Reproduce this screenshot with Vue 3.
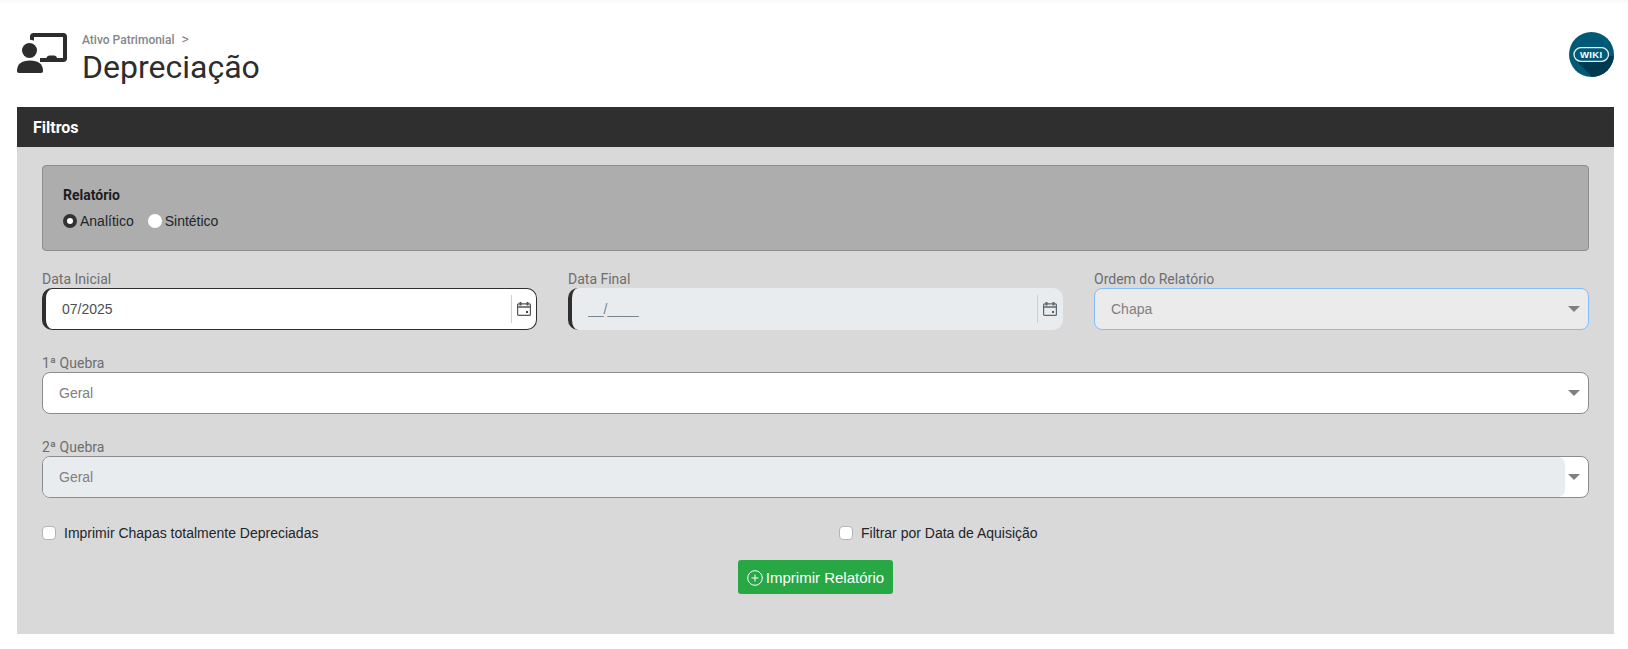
<script setup>
const radios = [
  { label: "Analítico", checked: true },
  { label: "Sintético", checked: false }
]
const checks = ["Imprimir Chapas totalmente Depreciadas", "Filtrar por Data de Aquisição"]
</script>

<template>
  <div class="page">
    <header class="header">
      <div class="title-group">
        <svg class="main-icon" viewBox="0 0 50 42" width="50" height="42">
          <path d="M13 3.500C13 1.400 14.400 0 16.500 0H46.500C48.600 0 50 1.400 50 3.500V25.500C50 27.600 48.600 29 46.500 29H23V25H29.500C29.800 23.500 31 22.500 32.500 22.500H37C38.500 22.500 39.700 23.500 40 25H46V4H17V7.800C15.700 7.200 14.300 6.800 13 6.800Z" fill="#2d2d2d"/>
          <circle cx="12.500" cy="17.500" r="7.500" fill="#2d2d2d"/>
          <path d="M0 38C0 31 4.500 27.500 13 27.500C21.500 27.500 26 31 26 38C26 39.300 25.300 40 24 40H2C.7 40 0 39.300 0 38Z" fill="#2d2d2d"/>
        </svg>
        <div class="titles">
          <div class="crumb">Ativo Patrimonial <span class="crumb-sep">&gt;</span></div>
          <h1 class="title">Depreciação</h1>
        </div>
      </div>
      <svg class="wiki" viewBox="0 0 45 45" width="45" height="45">
        <defs>
          <clipPath id="wiki-clip"><circle cx="22.500" cy="22.500" r="22.500"/></clipPath>
        </defs>
        <circle cx="22.500" cy="22.500" r="22.500" fill="#005a75"/>
        <path d="M7 28L38 24L48 24L48 48L26 48Z" fill="#003a50" clip-path="url(#wiki-clip)"/>
        <rect x="5" y="15.700" width="34.500" height="13.600" rx="6.800" fill="#005a75" stroke="#e8f0f3" stroke-width="1.300"/>
        <text x="22.300" y="26.300" text-anchor="middle" class="wiki-text">WIKI</text>
      </svg>
    </header>

    <section class="card">
      <div class="card-head">Filtros</div>
      <div class="card-body">
        <div class="report-box">
          <div class="report-title">Relatório</div>
          <div class="radios">
            <label class="radio" v-for="r in radios" :key="r.label">
              <span class="radio-dot" :class="{ on: r.checked }"></span>{{ r.label }}
            </label>
          </div>
        </div>

        <div class="row-3">
          <div class="field">
            <label class="lbl">Data Inicial</label>
            <div class="date active">
              <input class="date-input" value="07/2025" readonly>
              <span class="date-btn">
                <svg viewBox="0 0 14 14" width="14" height="14"><path d="M3.500 0V3.500M10.500 0V3.500" stroke="#555" stroke-width="2" fill="none"/><rect x="0.600" y="1.800" width="12.800" height="11.600" rx="1" fill="none" stroke="#555" stroke-width="1.200"/><path d="M1 5H13" stroke="#555" stroke-width="1.500"/><rect x="9" y="9" width="2" height="2" fill="#444"/></svg>
              </span>
            </div>
          </div>
          <div class="field">
            <label class="lbl">Data Final</label>
            <div class="date off">
              <input class="date-input" value="__/____" readonly>
              <span class="date-btn">
                <svg viewBox="0 0 14 14" width="14" height="14"><path d="M3.500 0V3.500M10.500 0V3.500" stroke="#5b6770" stroke-width="2" fill="none"/><rect x="0.600" y="1.800" width="12.800" height="11.600" rx="1" fill="none" stroke="#5b6770" stroke-width="1.200"/><path d="M1 5H13" stroke="#5b6770" stroke-width="1.500"/><rect x="9" y="9" width="2" height="2" fill="#505c66"/></svg>
              </span>
            </div>
          </div>
          <div class="field">
            <label class="lbl">Ordem do Relatório</label>
            <div class="select focused"><span class="select-val">Chapa</span><i class="caret"></i></div>
          </div>
        </div>

        <div class="field block">
          <label class="lbl">1ª Quebra</label>
          <div class="select"><span class="select-val">Geral</span><i class="caret"></i></div>
        </div>

        <div class="field block">
          <label class="lbl">2ª Quebra</label>
          <div class="select disabled"><span class="select-val">Geral</span><i class="caret"></i></div>
        </div>

        <div class="checks">
          <label class="check" v-for="c in checks" :key="c"><span class="box"></span>{{ c }}</label>
        </div>

        <div class="actions">
          <button class="btn">
            <svg class="btn-icon" viewBox="0 0 16 16" width="16" height="16"><circle cx="8" cy="8" r="7.300" fill="none" stroke="#fff" stroke-width="1"/><path d="M8 4.500V11.500M4.500 8H11.500" stroke="#fff" stroke-width="1" fill="none"/></svg>
            Imprimir Relatório
          </button>
        </div>
      </div>
    </section>
  </div>
</template>

<style>
html, body { background: #fff; }
</style>

<style scoped>
.page {
  height: 649px;
  padding: 0 14px 0 17px;
  box-sizing: border-box;
  overflow: hidden;
  font-family: Roboto, sans-serif;
  background: linear-gradient(#f7f7f7, #fff 4px);
}

.header {
  height: 107px;
  display: flex;
  justify-content: space-between;
  padding-top: 32px;
  box-sizing: border-box;
}

.title-group {
  display: flex;
  gap: 15px;
}

.main-icon {
  margin-top: 1px;
}

.crumb {
  height: 14px;
  margin-top: 1px;
  font-size: 12px;
  font-weight: 500;
  line-height: 14px;
  color: #86868b;
}

.crumb-sep {
  margin-left: 4px;
  font-size: 14px;
  font-weight: 400;
  line-height: 0;
}

.title {
  margin: 1px 0 0;
  font-size: 32px;
  font-weight: 400;
  line-height: 38px;
  color: #2d2d2d;
}

.wiki-text {
  font-family: "Liberation Sans", sans-serif;
  font-size: 9.500px;
  font-weight: 700;
  letter-spacing: 0.4px;
  fill: #fff;
}

.card {
  height: 527px;
  background: #d9d9d9;
}

.card-head {
  height: 40px;
  line-height: 41px;
  padding-left: 16px;
  background: #2f2f2f;
  color: #fff;
  font-size: 16px;
  font-weight: 700;
}

.card-body {
  padding: 18px 25px 0;
}

.report-box {
  height: 86px;
  box-sizing: border-box;
  padding: 21px 20px 0;
  background: #adadad;
  border: 1px solid #8e8e8e;
  border-radius: 4px;
}

.report-title {
  font-size: 14px;
  font-weight: 700;
  line-height: 16px;
  color: #1c1c1c;
}

.radios {
  display: flex;
  gap: 14px;
  margin-top: 10px;
}

.radio {
  display: flex;
  align-items: center;
  gap: 3px;
  font-family: "Liberation Sans", sans-serif;
  font-size: 14px;
  line-height: 16px;
  color: #212529;
}

.radio-dot {
  width: 14px;
  height: 14px;
  box-sizing: border-box;
  border-radius: 50%;
  background: #fff;
}

.radio-dot.on {
  border: 4px solid #333;
}

.row-3 {
  display: grid;
  grid-template-columns: repeat(3, 1fr);
  gap: 31px;
  margin-top: 19px;
}

.field.block {
  margin-top: 24px;
}

.lbl {
  display: block;
  height: 18px;
  font-size: 14px;
  line-height: 18px;
  color: #6e6e6e;
}

.date {
  height: 42px;
  box-sizing: border-box;
  display: flex;
  align-items: center;
  border-radius: 10px;
  border-left: 4px solid #2f2f2f;
}

.date.active {
  background: #fff;
  border-top: 1px solid #2f2f2f;
  border-right: 1px solid #2f2f2f;
  border-bottom: 1px solid #2f2f2f;
}

.date.off {
  background: #e9ecef;
  padding-right: 1px;
}

.date-input {
  flex: 1;
  min-width: 0;
  height: 100%;
  padding: 0 0 0 16px;
  border: 0;
  outline: 0;
  background: transparent;
  font-family: "Liberation Sans", sans-serif;
  font-size: 14px;
  color: #495057;
}

.off .date-input {
  color: #7a8590;
}

.date-btn {
  width: 24px;
  height: 28px;
  flex: none;
  display: flex;
  align-items: center;
  justify-content: center;
  border-left: 1px solid #cfcfcf;
}

.select {
  position: relative;
  height: 42px;
  box-sizing: border-box;
  padding-left: 16px;
  display: flex;
  align-items: center;
  background: #fff;
  border: 1px solid #8c8c8c;
  border-radius: 8px;
  font-family: "Liberation Sans", sans-serif;
  font-size: 14px;
  color: #808080;
}

.select.focused {
  background: #ebebeb;
  border-color: #80bdff;
}

.select.disabled::before {
  content: "";
  position: absolute;
  top: 0;
  bottom: 0;
  left: 0;
  right: 23px;
  background: #e9ecef;
  border-radius: 7px;
}

.select-val {
  position: relative;
}

.caret {
  position: absolute;
  right: 8px;
  top: 17px;
  border-left: 6px solid transparent;
  border-right: 6px solid transparent;
  border-top: 6px solid #808080;
}

.checks {
  display: grid;
  grid-template-columns: 797px 1fr;
  margin-top: 26px;
}

.check {
  display: flex;
  align-items: center;
  gap: 8px;
  font-family: "Liberation Sans", sans-serif;
  font-size: 14px;
  line-height: 18px;
  color: #212529;
}

.box {
  width: 14px;
  height: 14px;
  box-sizing: border-box;
  background: #fff;
  border: 1px solid #adb5bd;
  border-radius: 4px;
}

.actions {
  display: flex;
  margin-top: 18px;
  margin-left: 696px;
}

.btn {
  width: 155px;
  height: 34px;
  padding: 0;
  display: flex;
  align-items: center;
  justify-content: center;
  gap: 3px;
  border: 0;
  border-radius: 3px;
  background: #28a745;
  color: #fff;
  font-family: "Liberation Sans", sans-serif;
  font-size: 15px;
}

.btn-icon {
  margin-top: 2px;
}
</style>
